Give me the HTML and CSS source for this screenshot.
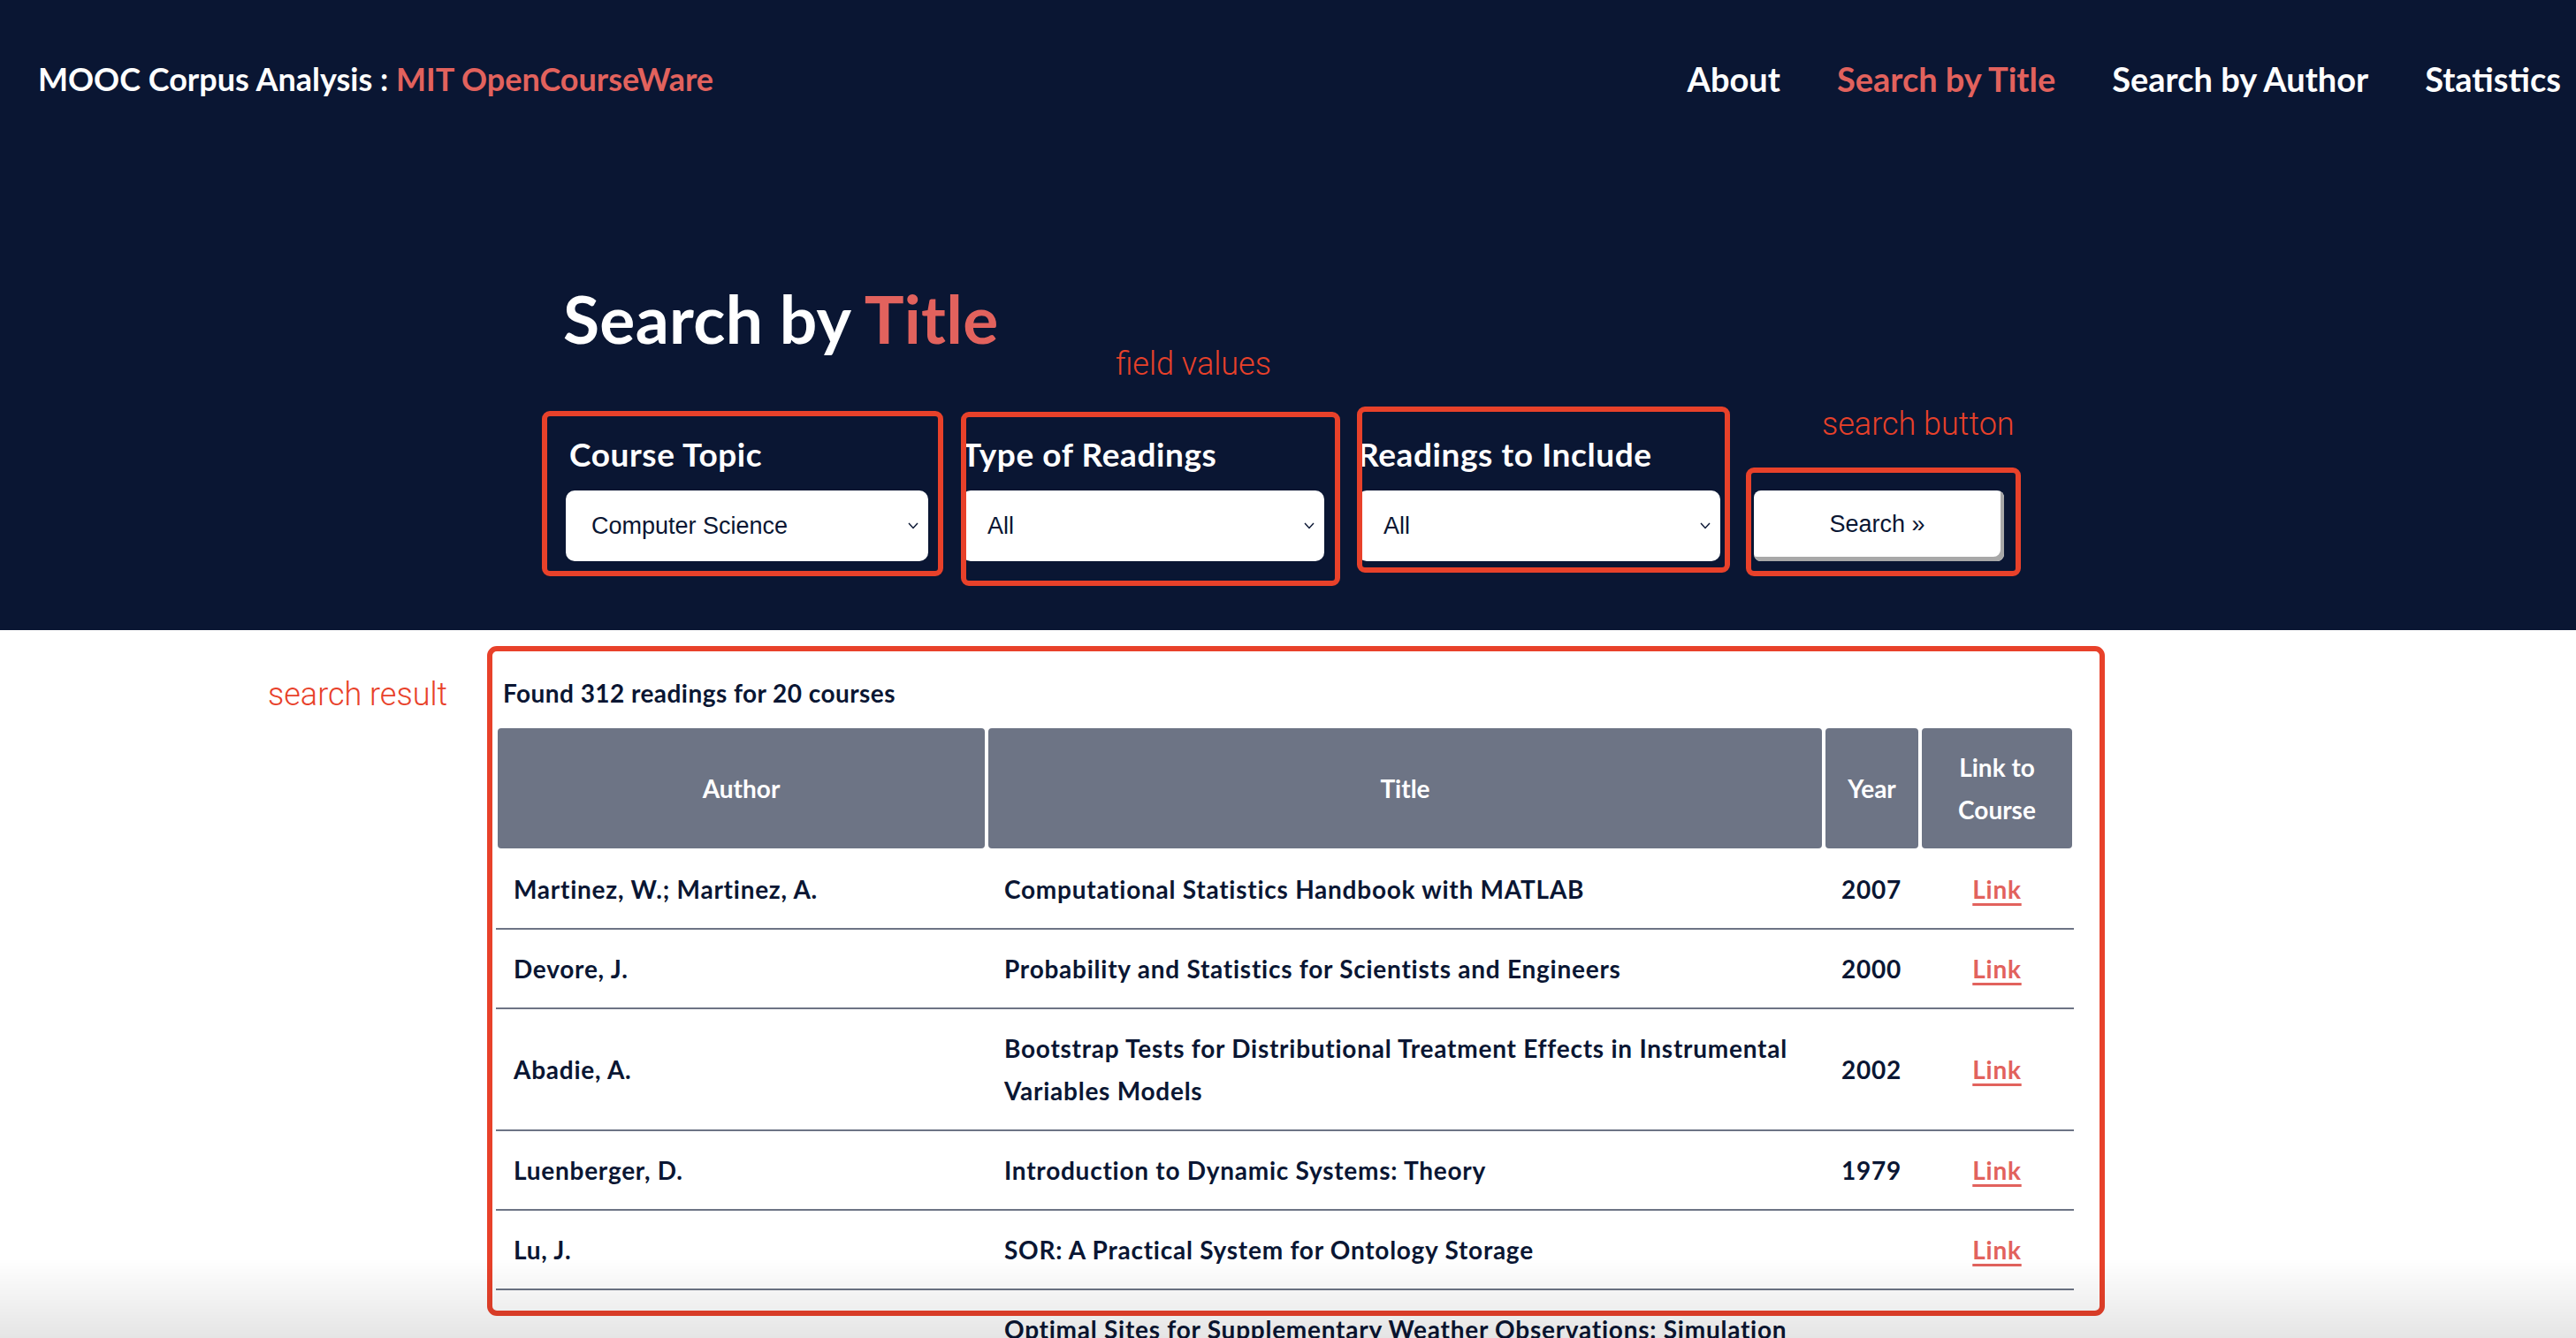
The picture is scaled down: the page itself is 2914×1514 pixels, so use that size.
FILE: index.html
```html
<!DOCTYPE html>
<html lang="en">
<head>
<meta charset="utf-8">
<title>MOOC Corpus Analysis : MIT OpenCourseWare – Search by Title</title>
<link rel="stylesheet" href="styles.css">
</head>
<body>
<header class="hero">
  <nav class="topnav">
    <a class="brand" href="#">MOOC Corpus Analysis : <span class="accent">MIT OpenCourseWare</span></a>
    <ul class="menu">
      <li><a href="#">About</a></li>
      <li><a class="active" href="#">Search by Title</a></li>
      <li><a href="#">Search by Author</a></li>
      <li><a href="#">Statistics</a></li>
    </ul>
  </nav>
  <section class="search">
    <h1 class="search-title">Search by <span class="accent">Title</span></h1>
    <form class="fields">
      <div class="field">
        <label class="field-label field-label--inset">Course Topic</label>
        <div class="select"><span>Computer Science</span><svg class="chevron" viewBox="0 0 12 8" width="12" height="8"><polyline points="1,1 6,6.5 11,1" fill="none" stroke="#0a1633" stroke-width="1.4"/></svg></div>
      </div>
      <div class="field">
        <label class="field-label">Type of Readings</label>
        <div class="select"><span>All</span><svg class="chevron" viewBox="0 0 12 8" width="12" height="8"><polyline points="1,1 6,6.5 11,1" fill="none" stroke="#0a1633" stroke-width="1.4"/></svg></div>
      </div>
      <div class="field">
        <label class="field-label">Readings to Include</label>
        <div class="select"><span>All</span><svg class="chevron" viewBox="0 0 12 8" width="12" height="8"><polyline points="1,1 6,6.5 11,1" fill="none" stroke="#0a1633" stroke-width="1.4"/></svg></div>
      </div>
      <div class="field field--button">
        <button class="search-btn" type="button">Search &raquo;</button>
      </div>
    </form>
  </section>
</header>

<main class="results">
  <p class="summary">Found 312 readings for 20 courses</p>
  <table class="readings">
    <colgroup>
      <col class="col-author"><col class="col-title"><col class="col-year"><col class="col-link">
    </colgroup>
    <thead>
      <tr><th>Author</th><th>Title</th><th>Year</th><th>Link to Course</th></tr>
    </thead>
    <tbody>
      <tr><td>Martinez, W.; Martinez, A.</td><td>Computational Statistics Handbook with MATLAB</td><td>2007</td><td class="link-cell"><a href="#">Link</a></td></tr>
      <tr><td>Devore, J.</td><td>Probability and Statistics for Scientists and Engineers</td><td>2000</td><td class="link-cell"><a href="#">Link</a></td></tr>
      <tr><td>Abadie, A.</td><td>Bootstrap Tests for Distributional Treatment Effects in Instrumental Variables Models</td><td>2002</td><td class="link-cell"><a href="#">Link</a></td></tr>
      <tr><td>Luenberger, D.</td><td>Introduction to Dynamic Systems: Theory</td><td>1979</td><td class="link-cell"><a href="#">Link</a></td></tr>
      <tr><td>Lu, J.</td><td>SOR: A Practical System for Ontology Storage</td><td></td><td class="link-cell"><a href="#">Link</a></td></tr>
      <tr><td>Arnold, J.</td><td>Optimal Sites for Supplementary Weather Observations: Simulation with a Small Model</td><td>1998</td><td class="link-cell"><a href="#">Link</a></td></tr>
    </tbody>
  </table>
</main>

<div class="annotations">
  <div class="note-box box-topic"></div>
  <div class="note-box box-type"></div>
  <div class="note-box box-include"></div>
  <div class="note-box box-button"></div>
  <div class="note-box box-result"></div>
  <span class="note note-fields">field values</span>
  <span class="note note-button">search button</span>
  <span class="note note-result">search result</span>
</div>
<div class="bottom-fade"></div>
</body>
</html>
```

FILE: styles.css
```css
* { box-sizing: border-box; }

html, body {
  margin: 0;
  padding: 0;
}

body {
  position: relative;
  font-family: Lato, "Noto Sans", sans-serif;
  color: #0a1633;
  background: #ffffff;
}

.accent { color: #e2625d; }

/* ---------- hero ---------- */
.hero {
  height: 713px;
  background: #0a1633;
  color: #ffffff;
}

.topnav {
  height: 178px;
  display: flex;
  align-items: center;
  justify-content: space-between;
  padding: 0 17px 0 43px;
}

.brand {
  font-size: 36px;
  font-weight: 700;
  color: #ffffff;
  text-decoration: none;
}

.menu {
  display: flex;
  gap: 64px;
  list-style: none;
  margin: 0;
  padding: 0;
}

.menu a {
  font-size: 38px;
  font-weight: 700;
  color: #ffffff;
  text-decoration: none;
}

.menu a.active { color: #e2625d; }

.search {
  margin-left: 640px;
  padding-top: 137px;
}

.search-title {
  margin: 0 0 88px -3px;
  font-size: 75px;
  line-height: 90px;
  font-weight: 700;
  letter-spacing: 0.3px;
}

.fields {
  display: grid;
  grid-template-columns: 410px 410px 410px 283px;
  column-gap: 38px;
  align-items: end;
  margin: 0;
}

.field {
  display: flex;
  flex-direction: column;
}

.field-label {
  font-size: 37px;
  line-height: 42px;
  font-weight: 700;
  letter-spacing: 0.6px;
  margin-bottom: 20px;
  white-space: nowrap;
}

.field-label--inset { padding-left: 4px; }

.select {
  height: 80px;
  background: #ffffff;
  border-radius: 10px;
  display: flex;
  align-items: center;
  justify-content: space-between;
  padding: 0 11px 0 29px;
  font-family: "Liberation Sans", Arial, sans-serif;
  font-size: 27px;
  color: #0a1633;
}

.chevron { display: block; }

.search-btn {
  height: 80px;
  width: 283px;
  border: none;
  border-radius: 8px;
  background: #ffffff;
  box-shadow: inset -4px -5px 0 #a8a8a8;
  font-family: "Liberation Sans", Arial, sans-serif;
  font-size: 27px;
  color: #0a1633;
  padding: 0 4px 4px 0;
}

/* ---------- results ---------- */
.results {
  margin-left: 561px;
  width: 1785px;
}

.summary {
  margin: 54px 0 21px 8px;
  font-size: 28px;
  line-height: 34px;
  font-weight: 700;
  letter-spacing: 0.45px;
}

.readings {
  width: 1785px;
  table-layout: fixed;
  border-collapse: separate;
  border-spacing: 0;
  font-size: 28px;
  line-height: 48px;
  font-weight: 700;
}

.col-author { width: 555px; }
.col-title { width: 947px; }
.col-year { width: 109px; }
.col-link { width: 174px; }

.readings th {
  background: #6d7485;
  color: #ffffff;
  border: 2px solid #ffffff;
  border-radius: 6px;
  padding: 20px 18px;
  text-align: center;
  font-weight: 700;
}

.readings td {
  padding: 20px 20px;
  border-bottom: 2px solid #6d7485;
  vertical-align: middle;
  color: #0a1633;
  letter-spacing: 0.75px;
}

.readings td.link-cell { text-align: center; padding: 20px 0; }

.readings td a {
  color: #e2625d;
  text-decoration: underline;
  text-decoration-thickness: 3px;
  text-underline-offset: 5px;
}

/* ---------- annotations (overlay) ---------- */
.annotations {
  position: absolute;
  top: 0;
  left: 0;
  width: 100%;
  height: 0;
}

.note-box {
  position: absolute;
  border: 6px solid #e8412a;
  border-radius: 9px;
}

.box-topic { left: 613px; top: 465px; width: 454px; height: 187px; }
.box-type { left: 1087px; top: 466px; width: 429px; height: 197px; }
.box-include { left: 1535px; top: 460px; width: 422px; height: 188px; }
.box-button { left: 1975px; top: 529px; width: 311px; height: 123px; }
.box-result { left: 551px; top: 731px; width: 1830px; height: 758px; border-radius: 11px; }

.note {
  position: absolute;
  font-family: Roboto, "Liberation Sans", sans-serif;
  font-weight: 300;
  font-size: 36px;
  line-height: 40px;
  color: #e8412a;
  white-space: nowrap;
}

.note-fields { left: 1262px; top: 392px; }
.note-button { left: 2061px; top: 460px; }
.note-result { left: 303px; top: 766px; }

.bottom-fade {
  position: fixed;
  left: 0;
  right: 0;
  bottom: 0;
  height: 90px;
  pointer-events: none;
  background: linear-gradient(to bottom, rgba(0, 0, 0, 0), rgba(0, 0, 0, 0.1));
}
```
